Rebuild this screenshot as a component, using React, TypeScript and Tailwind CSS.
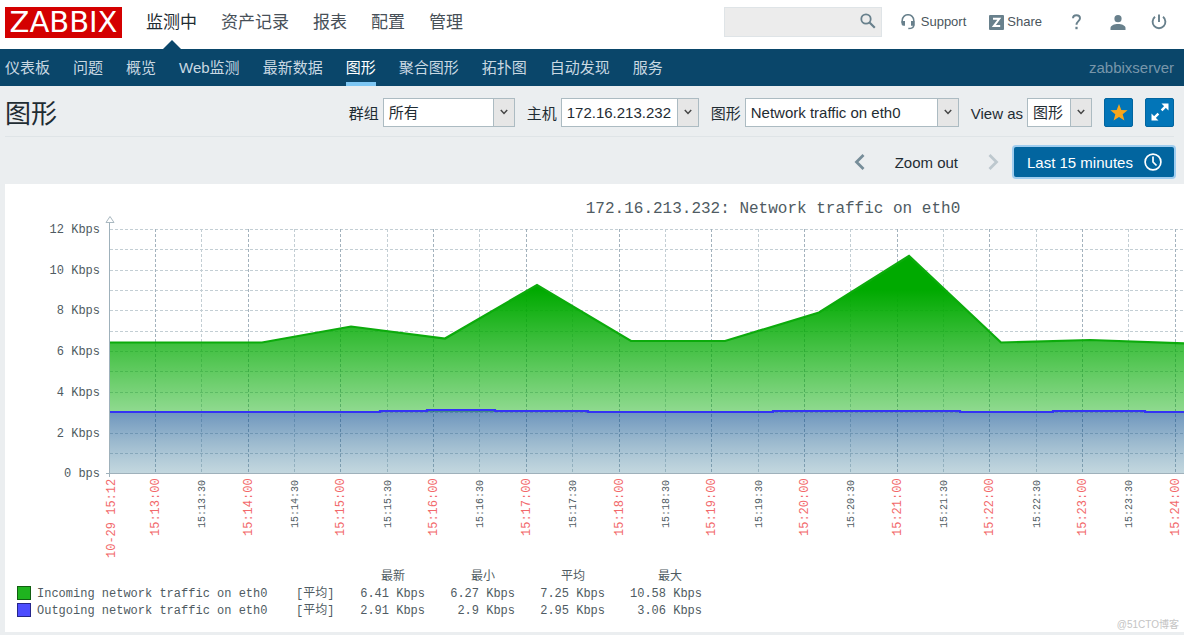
import type { ReactNode } from "react";

const topMenu = ["监测中", "资产记录", "报表", "配置", "管理"]
const subMenu = ["仪表板", "问题", "概览", "Web监测", "最新数据", "图形", "聚合图形", "拓扑图", "自动发现", "服务"]

const legend = [
  { name: "Incoming network traffic on eth0", color: "bg-[#1fb31f] border-[#115e11]", values: ["6.41 Kbps", "6.27 Kbps", "7.25 Kbps", "10.58 Kbps"] },
  { name: "Outgoing network traffic on eth0", color: "bg-[#4d4dff] border-[#26268a]", values: ["2.91 Kbps", "2.9 Kbps", "2.95 Kbps", "3.06 Kbps"] },
]

// chart geometry
const LEFT = 105
const TOP = 45
const BOTTOM = 289
const WIDTH = 1240
const incoming = "105,158.5 257,158.5 346,142.5 440,154.5 532,101 626,157 720,157 814,128.5 904,72 996,158.5 1085,156 1180,159.5 1240,160"
const outgoing = "105,228 375,228 375,227 422,227 422,226 490,226 490,227 583,227 583,228 768,228 768,227 955,227 955,228 1048,228 1048,227 1140,227 1140,228 1240,228"
const yLabels = ["12 Kbps", "10 Kbps", "8 Kbps", "6 Kbps", "4 Kbps", "2 Kbps", "0 bps"]

const ticks = Array.from({ length: 23 }).map((_, i) => ({
  x: Math.round(150 + i * 46.35),
  major: i % 2 === 0,
  label: `15:${13 + Math.floor(i / 2)}:${i % 2 === 0 ? "00" : "30"}`,
}))

function Chart() {
  return (
    <svg width={WIDTH} height="385" className="block max-w-none" role="img" aria-label="Network traffic on eth0">
      <defs>
        <linearGradient id="green" gradientUnits="userSpaceOnUse" x1="0" y1="106" x2="0" y2="227">
          <stop offset="0" stopColor="#00aa00" />
          <stop offset="1" stopColor="#00aa00" stopOpacity="0.44" />
        </linearGradient>
        <linearGradient id="blue" gradientUnits="userSpaceOnUse" x1="0" y1="228" x2="0" y2={BOTTOM}>
          <stop offset="0" stopColor="#00468c" stopOpacity="0.57" />
          <stop offset="1" stopColor="#377a94" stopOpacity="0.3" />
        </linearGradient>
      </defs>

      <text x="768" y="29" textAnchor="middle" className="fill-[#4f5b62] text-base">172.16.213.232: Network traffic on eth0</text>

      {/* grid */}
      {Array.from({ length: 12 }).map((_, i) => {
        const y = Math.round(TOP + i * 20.35) + 0.5
        return <line key={i} x1={LEFT} x2={WIDTH} y1={y} y2={y} stroke="#c3ced4" strokeDasharray="3 2" />
      })}
      {ticks.map((t) => (
        <line key={t.label} x1={t.x + 0.5} x2={t.x + 0.5} y1={TOP} y2={BOTTOM} stroke={t.major ? "#a3b2bd" : "#c3ced4"} strokeDasharray="3 2" />
      ))}

      {/* areas */}
      <polygon points={`${incoming} 1240,228 105,228`} fill="url(#green)" />
      <polygon points={`${outgoing} 1240,${BOTTOM} 105,${BOTTOM}`} fill="url(#blue)" />
      <polyline points={incoming} fill="none" stroke="#0cab0c" strokeWidth="2.2" />
      <polyline points={outgoing} fill="none" stroke="#3333f5" strokeWidth="2.2" />

      {/* axes */}
      <path d={`M${LEFT - 4} ${BOTTOM + 0.5}H${WIDTH}`} stroke="#9fb1bb" />
      <path d={`M${LEFT - 0.5} 38V${BOTTOM + 4}`} stroke="#9fb1bb" />
      <path d="M101 38.5h8l-4 -6z" fill="white" stroke="#a9b8c0" />

      {yLabels.map((label, i) => (
        <text key={label} x="95" y={49 + Math.round(i * 40.7)} textAnchor="end" className="fill-[#4f5b62] text-xs">{label}</text>
      ))}
      <text transform="translate(110 374) rotate(-90)" className="fill-[#f2696b] text-xs">10-29 15:12</text>
      {ticks.map((t) => (
        <text
          key={t.label}
          transform={`translate(${t.x + 4} ${t.major ? 352 : 344}) rotate(-90)`}
          className={t.major ? "fill-[#f2696b] text-xs" : "fill-[#4f5b62] text-[10px]"}
        >
          {t.label}
        </text>
      ))}
    </svg>
  )
}

function Field({ id, label, value, width }: { id: string; label: string; value: string; width: string }) {
  return (
    <div className="flex items-center gap-1">
      <label htmlFor={id} className="pt-1">{label}</label>
      <div className={`relative h-[29px] ${width}`}>
        <select id={id} className="h-full w-full appearance-none border border-[#acbbc2] bg-white pt-[2px] pl-[5px] text-[#1f2c33] outline-none">
          <option>{value}</option>
        </select>
        <span className="pointer-events-none absolute inset-y-0 right-0 flex w-[22px] items-center justify-center border border-[#acbbc2] bg-[#e6e6e6]">
          <svg width="8" height="6" viewBox="0 0 8 6" fill="none" stroke="#444" strokeWidth="1.5"><path d="M.8 1 4 4.4 7.2 1" /></svg>
        </span>
      </div>
    </div>
  )
}

function BlueButton({ label, children }: { label: string; children: ReactNode }) {
  return (
    <button aria-label={label} className="flex h-[29px] w-[29px] items-center justify-center rounded-xs border border-[#02659f] bg-[#0275b8]">
      {children}
    </button>
  )
}

function App() {
  return (
    <div className="min-h-screen overflow-hidden bg-[#ebeef0] font-['Liberation_Sans','Noto_Sans_CJK_SC',sans-serif] text-[15px] text-[#1f2c33]">
      <header>
        <div className="flex h-[49px] items-center bg-white pr-[17px] pb-[5px] pl-[5px]">
          <a href="#" className="flex h-[31px] w-[117px] items-center justify-center bg-[#d40000] font-['DejaVu_Sans',sans-serif] text-[29px] leading-none text-white">ZABBIX</a>
          <nav className="ml-6 flex gap-6 pt-[2px] text-[17px] text-[#475058]">
            {topMenu.map((item, i) => (
              <a key={item} href="#" className={i === 0 ? "relative text-[#1f2c33]" : ""}>
                {item}
                {i === 0 && (
                  <svg className="absolute top-[30px] left-1/2 -ml-[10px]" width="20" height="10" viewBox="0 0 20 10"><path d="M0 10 10 0l10 10z" fill="#0a466a" /></svg>
                )}
              </a>
            ))}
          </nav>
          <div className="ml-auto flex items-center text-[13px] text-[#4a555c]">
            <div className="relative mr-[19px]">
              <input type="text" aria-label="Search" className="block h-[30px] w-[158px] border border-[#dfe4e7] bg-[#ececec] pl-2 pr-7 outline-none" />
              <button aria-label="Search" className="absolute top-[6px] right-[6px]">
                <svg width="16" height="16" viewBox="0 0 16 16" fill="none" stroke="#68808c"><circle cx="6" cy="6" r="4.7" strokeWidth="1.8" /><path d="m9.5 9.5 5.3 5.3" strokeWidth="2.2" /></svg>
              </button>
            </div>
            <a href="#" className="flex items-center gap-[6px]">
              <svg width="14" height="16" viewBox="0 0 14 16" fill="none" stroke="#68808c" strokeWidth="1.5">
                <path d="M1.2 9V6.500a5.800 5.800 0 0 1 11.600 0V11" />
                <path d="M.5 7h3.500v4.800H2.500a2 2 0 0 1-2-2zM13.500 7H10v4.800h3.500z" fill="#68808c" stroke="none" />
                <path d="M12.800 11c0 2.600-1.400 3.600-5.500 3.600" />
              </svg>
              Support
            </a>
            <a href="#" className="ml-[23px] flex items-center gap-[3px]">
              <svg width="15" height="15" viewBox="0 0 15 15"><rect width="15" height="15" rx="1" fill="#68808c" /><path d="M4 3.800h6.300L4.800 11.100H11.200" fill="none" stroke="white" strokeWidth="2" /></svg>
              Share
            </a>
            <a href="#" aria-label="Help" className="ml-[30px]">
              <svg width="9" height="16" viewBox="0 0 9 16"><path d="M1 4.200C1 2.200 2.400 1.200 4.400 1.200S8 2.400 8 4.300c0 2.700-3.500 3-3.500 6.400" fill="none" stroke="#68808c" strokeWidth="1.900" /><rect x="3.400" y="12.800" width="2.200" height="2.400" fill="#68808c" /></svg>
            </a>
            <a href="#" aria-label="User profile" className="ml-[29px]">
              <svg width="16" height="15" viewBox="0 0 16 15" fill="#68808c"><circle cx="8" cy="3.700" r="3.600" /><path d="M.5 15v-2C.5 10.500 4.500 9 8 9s7.500 1.500 7.500 4v2z" /></svg>
            </a>
            <a href="#" aria-label="Sign out" className="ml-[25px]">
              <svg width="16" height="16" viewBox="0 0 16 16" fill="none" stroke="#68808c" strokeWidth="1.900"><path d="M8 .5V8M4 2.800a6.400 6.400 0 1 0 8 0" /></svg>
            </a>
          </div>
        </div>
        <nav className="flex h-[37px] items-center gap-[23px] bg-[#0a466a] pr-[10px] pl-[5px] text-[#c9d8e2]">
          {subMenu.map((item) => (
            <a key={item} href="#" className={item === "图形" ? "flex h-full items-center border-b-4 border-[#7dc6f3] pt-[5px] text-white" : "pt-[2px]"}>{item}</a>
          ))}
          <span className="ml-auto pt-[2px] text-[#7896aa]">zabbixserver</span>
        </nav>
      </header>

      <main className="pl-[5px]">
        <div className="mr-[10px] flex h-[51px] items-center gap-3 border-b border-[#dfe4e7] pt-[2px]">
          <h1 className="mr-auto pt-1 text-[26px]">图形</h1>
          <form className="flex items-center gap-3">
            <Field id="group" label="群组" value="所有" width="w-[132px]" />
            <Field id="host" label="主机" value="172.16.213.232" width="w-[138px]" />
            <Field id="graph" label="图形" value="Network traffic on eth0" width="w-[214px]" />
            <Field id="view" label="View as" value="图形" width="w-[65px]" />
          </form>
          <BlueButton label="Favourite">
            <svg width="18" height="17" viewBox="0 0 18 17"><path d="m9 0 2.300 5.900 6.300.4-4.900 4 1.700 6.200L9 13l-5.400 3.500 1.700-6.200-4.900-4 6.300-.4z" fill="#f9a61a" /></svg>
          </BlueButton>
          <BlueButton label="Fullscreen">
            <svg width="18" height="18" viewBox="0 0 18 18" fill="white" stroke="white"><path d="M10.500 .5h7v7zM.5 10.500v7h7z" stroke="none" /><path d="m10.600 7.400 4-4M3.400 14.600l4-4" strokeWidth="2.400" /></svg>
          </BlueButton>
        </div>

        <div className="flex h-[47px] items-center justify-end pt-[7px] pr-[10px] pb-1">
          <button aria-label="Previous period">
            <svg width="11" height="16" viewBox="0 0 11 16" fill="none" stroke="#768d99" strokeWidth="2.800"><path d="M9.500 1 2.500 8l7 7" /></svg>
          </button>
          <button className="mx-[30px] pt-[2px]">Zoom out</button>
          <button aria-label="Next period" disabled>
            <svg width="11" height="16" viewBox="0 0 11 16" fill="none" stroke="#bdc8ce" strokeWidth="2.800"><path d="m1.500 1 7 7-7 7" /></svg>
          </button>
          <button className="ml-[15px] flex h-[30px] w-[160px] items-center justify-between rounded-xs bg-[#02659f] pr-3 pl-[13px] text-white ring-2 ring-[#a0cdef]">
            <span className="pt-[2px]">Last 15 minutes</span>
            <svg width="18" height="18" viewBox="0 0 18 18" fill="none" stroke="white" strokeWidth="1.700"><circle cx="9" cy="9" r="7.900" /><path d="M9 3.500V9l3.500 3.500" /></svg>
          </button>
        </div>

        <section className="relative overflow-hidden bg-white pb-3 font-['Liberation_Mono','Noto_Sans_CJK_SC',monospace]">
          <Chart />
          <table className="ml-3 table-fixed text-xs leading-[17px] text-[#4f5b62]">
            <thead>
              <tr>
                <th className="w-5"></th>
                <th className="w-[259px]"></th>
                <th className="w-[43px]"></th>
                <th className="w-[86px] pr-5 text-right font-normal">最新</th>
                <th className="w-[90px] pr-5 text-right font-normal">最小</th>
                <th className="w-[90px] pr-5 text-right font-normal">平均</th>
                <th className="w-[97px] pr-5 text-right font-normal">最大</th>
              </tr>
            </thead>
            <tbody>
              {legend.map((row) => (
                <tr key={row.name}>
                  <td className="align-top"><span className={`block size-[14px] border ${row.color}`}></span></td>
                  <td>{row.name}</td>
                  <td>[平均]</td>
                  {row.values.map((v) => (
                    <td key={v} className="text-right">{v}</td>
                  ))}
                </tr>
              ))}
            </tbody>
          </table>
          <span className="absolute right-[5px] bottom-0 font-['Liberation_Sans','Noto_Sans_CJK_SC',sans-serif] text-[10px] text-[#c4c4c4]">@51CTO博客</span>
        </section>
      </main>
    </div>
  );
}

export default App;
